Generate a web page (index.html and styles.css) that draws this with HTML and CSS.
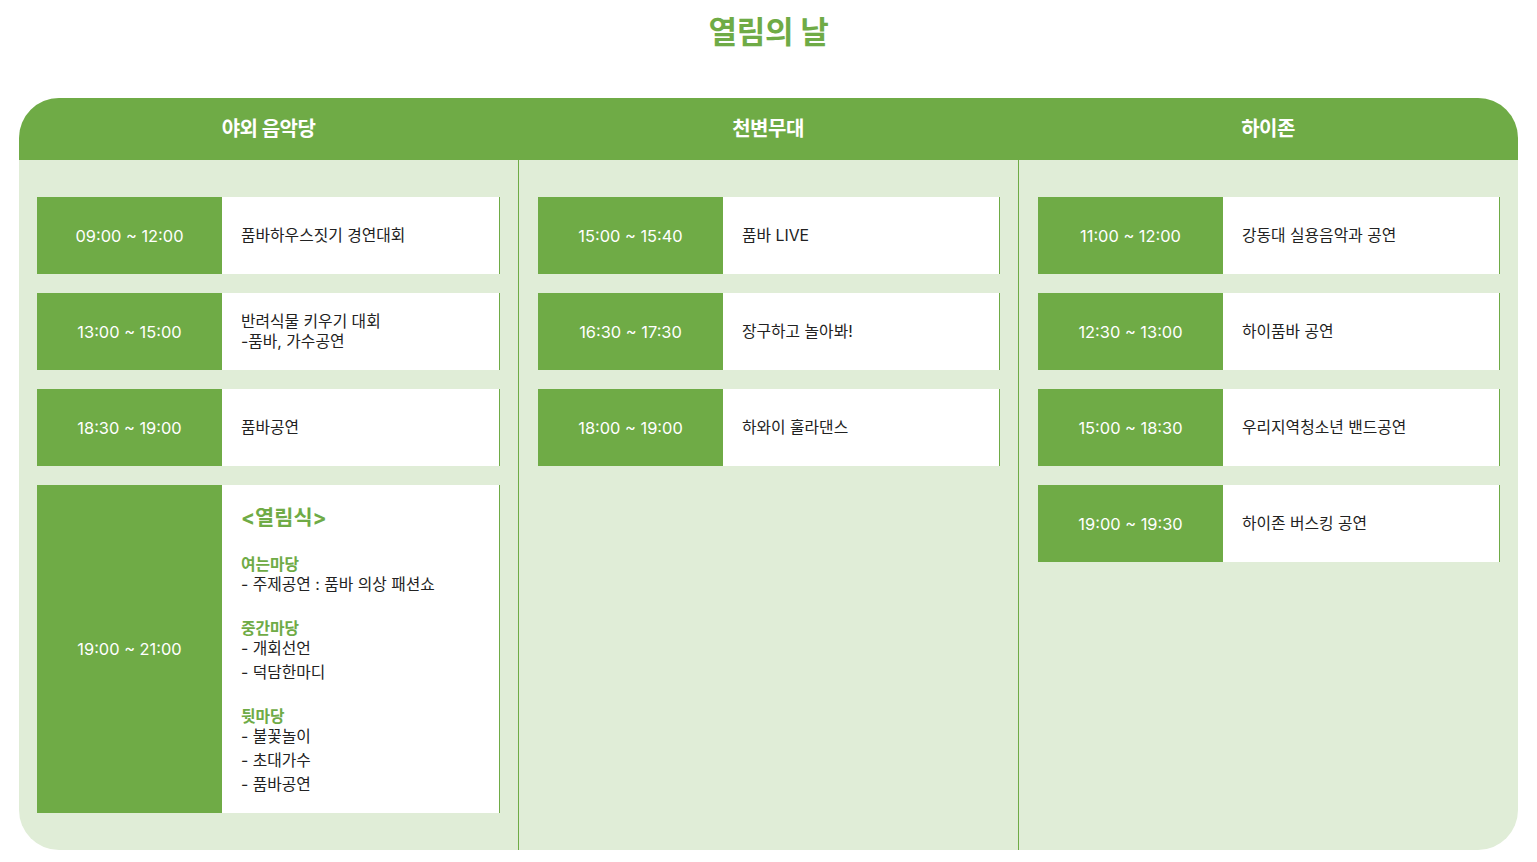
FILE: index.html
```html
<!DOCTYPE html>
<html lang="ko">
<head>
<meta charset="utf-8">
<title>열림의 날</title>
<link rel="stylesheet" href="styles.css">
</head>
<body>
<h1 class="page-title">열림의 날</h1>
<div class="schedule">
  <section class="stage">
    <h2 class="stage-head">야외 음악당</h2>
    <div class="stage-body">
      <div class="item"><div class="time">09:00 ~ 12:00</div><div class="desc">품바하우스짓기 경연대회</div></div>
      <div class="item"><div class="time">13:00 ~ 15:00</div><div class="desc">반려식물 키우기 대회<br>-품바, 가수공연</div></div>
      <div class="item"><div class="time">18:30 ~ 19:00</div><div class="desc">품바공연</div></div>
      <div class="item item-big">
        <div class="time">19:00 ~ 21:00</div>
        <div class="desc desc-big">
          <div class="big-title">&lt;열림식&gt;</div>
          <div class="sec">
            <div class="sec-head">여는마당</div>
            <div class="sec-line">- 주제공연 : 품바 의상 패션쇼</div>
          </div>
          <div class="sec">
            <div class="sec-head">중간마당</div>
            <div class="sec-line">- 개회선언</div>
            <div class="sec-line">- 덕담한마디</div>
          </div>
          <div class="sec">
            <div class="sec-head">뒷마당</div>
            <div class="sec-line">- 불꽃놀이</div>
            <div class="sec-line">- 초대가수</div>
            <div class="sec-line">- 품바공연</div>
          </div>
        </div>
      </div>
    </div>
  </section>
  <section class="stage">
    <h2 class="stage-head">천변무대</h2>
    <div class="stage-body divided">
      <div class="item"><div class="time">15:00 ~ 15:40</div><div class="desc">품바 LIVE</div></div>
      <div class="item"><div class="time">16:30 ~ 17:30</div><div class="desc">장구하고 놀아봐!</div></div>
      <div class="item"><div class="time">18:00 ~ 19:00</div><div class="desc">하와이 훌라댄스</div></div>
    </div>
  </section>
  <section class="stage">
    <h2 class="stage-head">하이존</h2>
    <div class="stage-body divided">
      <div class="item"><div class="time">11:00 ~ 12:00</div><div class="desc">강동대 실용음악과 공연</div></div>
      <div class="item"><div class="time">12:30 ~ 13:00</div><div class="desc">하이품바 공연</div></div>
      <div class="item"><div class="time">15:00 ~ 18:30</div><div class="desc">우리지역청소년 밴드공연</div></div>
      <div class="item"><div class="time">19:00 ~ 19:30</div><div class="desc">하이존 버스킹 공연</div></div>
    </div>
  </section>
</div>
</body>
</html>
```

FILE: styles.css
```css
* { box-sizing: border-box; }

html, body {
  margin: 0;
  padding: 0;
  background: #ffffff;
}

body {
  font-family: Inter, "Noto Sans CJK KR", sans-serif;
  color: #222222;
  padding: 0 19px 12px;
}

.page-title {
  margin: 0;
  height: 98px;
  padding-top: 12px;
  text-align: center;
  font-size: 31px;
  line-height: 40px;
  font-weight: 700;
  color: #6fab46;
  letter-spacing: -0.3px;
}

.schedule {
  display: grid;
  grid-template-columns: 499px 500px 500px;
  border-radius: 40px;
  overflow: hidden;
  background: #e0edd7;
}

.stage {
  display: flex;
  flex-direction: column;
}

.stage-head {
  margin: 0;
  height: 62px;
  background: #6fab46;
  color: #ffffff;
  font-size: 20px;
  font-weight: 700;
  line-height: 62px;
  text-align: center;
  letter-spacing: -0.5px;
}

.stage-body {
  flex: 1;
  display: flex;
  flex-direction: column;
  gap: 19px;
  padding: 37px 18px 37px 18px;
}

.stage-body.divided {
  border-left: 1px solid #6fab46;
  padding-left: 19px;
}

.item {
  display: flex;
  height: 77px;
  background: #ffffff;
  border-right: 1px solid #6fab46;
}

.item-big {
  height: 328px;
}

.time {
  flex: 0 0 185px;
  background: #6fab46;
  color: #ffffff;
  font-size: 16.4px;
  display: flex;
  align-items: center;
  justify-content: center;
}

.desc {
  flex: 1;
  display: flex;
  flex-direction: column;
  justify-content: center;
  padding-left: 19px;
  padding-top: 1px;
  font-size: 15.8px;
  line-height: 20px;
  color: #222222;
}

.desc-big {
  justify-content: flex-start;
  padding-top: 19px;
  padding-bottom: 18px;
}

.big-title {
  font-size: 20.8px;
  line-height: 28px;
  font-weight: 700;
  color: #6fab46;
  margin-bottom: 23px;
}

.sec {
  display: flex;
  flex-direction: column;
  gap: 4px;
}

.sec + .sec {
  margin-top: 24px;
}

.sec-head {
  font-size: 15.8px;
  line-height: 20px;
  font-weight: 700;
  color: #6fab46;
  margin-bottom: -4px;
}

.sec-line {
  font-size: 15.8px;
  line-height: 20px;
}
```
